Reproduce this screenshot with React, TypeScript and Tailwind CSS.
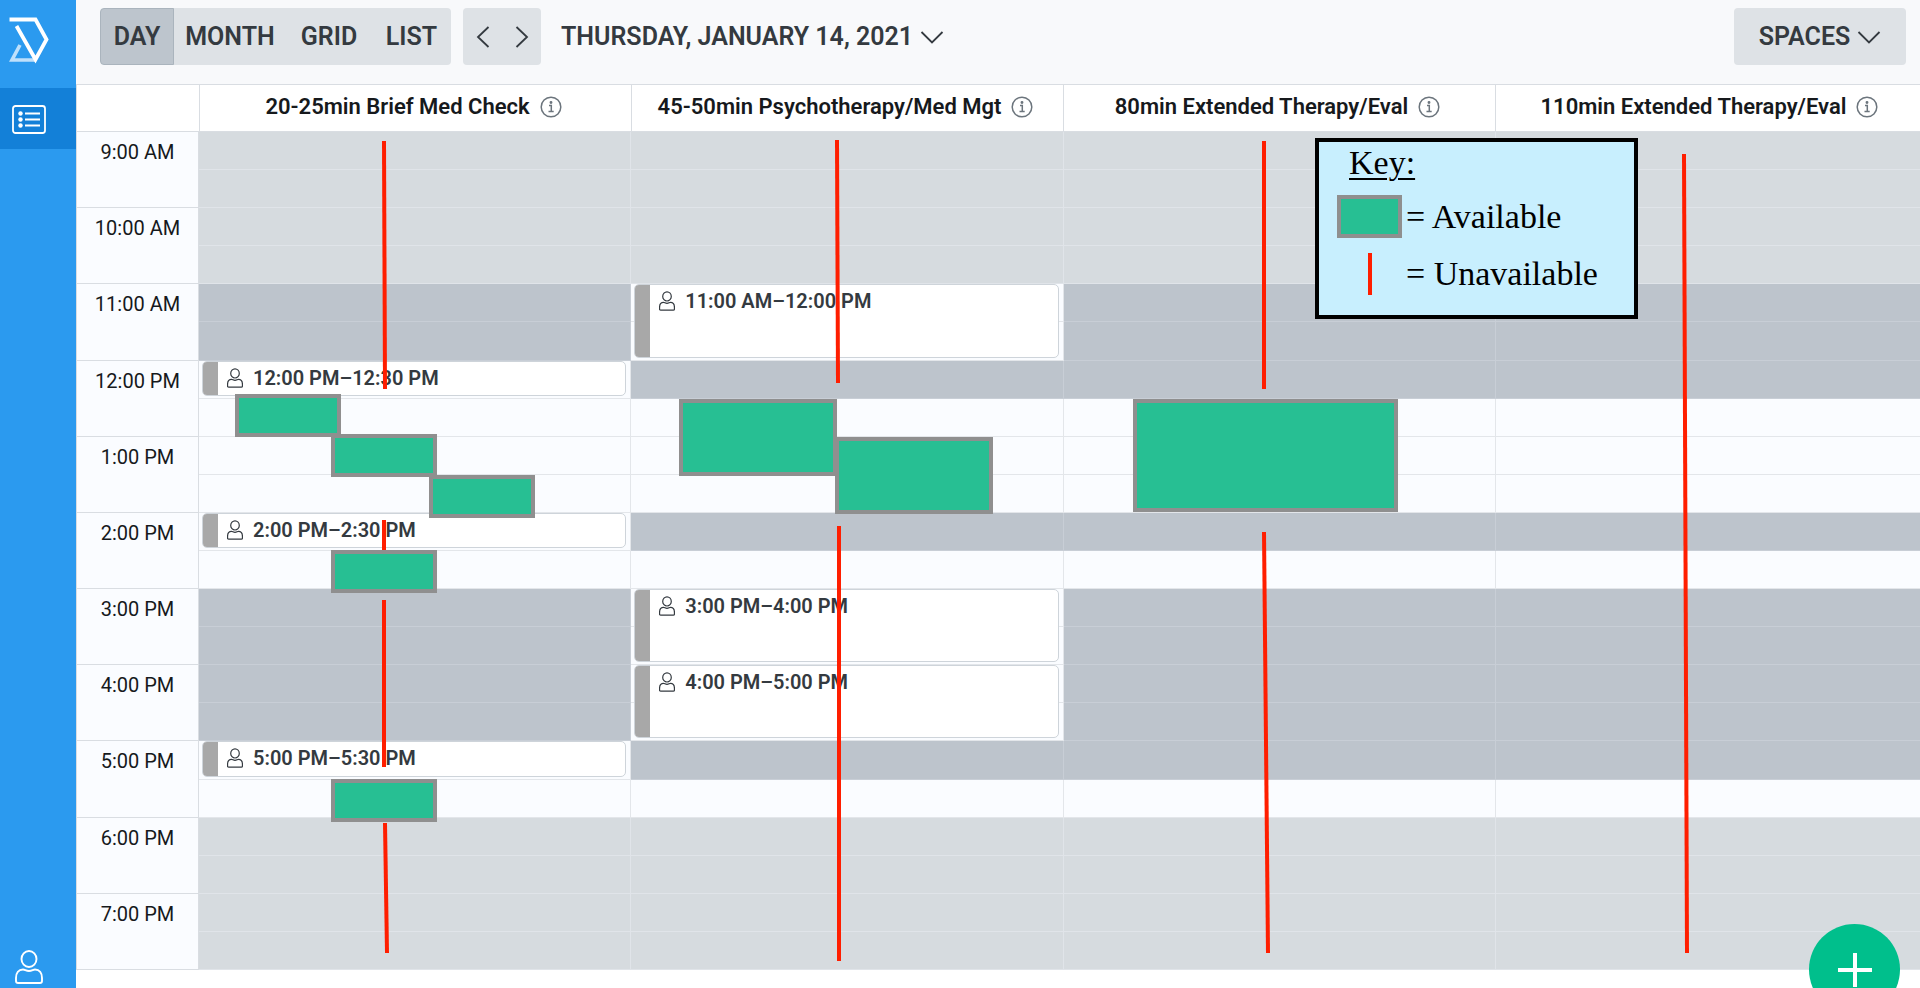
type Slot = 'closed' | 'busy' | 'open';

interface Appointment {
  start: number;
  span: number;
  label: string;
}

// Block: [left, top, width, height], Line: [x1, y1, x2, y2], both inside the column
interface Column {
  title: string;
  slots: string;
  appointments: Appointment[];
  blocks: [number, number, number, number][];
  lines: [number, number, number, number][];
}

const HOURS = [
  '9:00 AM', '10:00 AM', '11:00 AM', '12:00 PM', '1:00 PM', '2:00 PM',
  '3:00 PM', '4:00 PM', '5:00 PM', '6:00 PM', '7:00 PM',
];

// One letter per half hour: c = closed, b = busy, o = open
const SLOT_KINDS: Record<string, Slot> = { c: 'closed', b: 'busy', o: 'open' };

const SLOT_CLASSES: Record<Slot, string> = {
  closed: 'bg-[#d6dbdf] border-[#e0e4e9]',
  busy: 'bg-[#bdc4cc] border-[#c8ced6]',
  open: 'bg-[#fafcff] border-[#e3e6ea]',
};

const COLUMNS: Column[] = [
  {
    title: '20-25min Brief Med Check',
    slots: 'ccccbboooooobbbboocccc',
    appointments: [
      { start: 6, span: 1, label: '12:00 PM–12:30 PM' },
      { start: 10, span: 1, label: '2:00 PM–2:30 PM' },
      { start: 16, span: 1, label: '5:00 PM–5:30 PM' },
    ],
    blocks: [
      [36, 262, 106, 43],
      [132, 302, 106, 43],
      [230, 343, 106, 43],
      [132, 418, 106, 43],
      [132, 647, 106, 43],
    ],
    lines: [
      [185, 9, 186, 257],
      [185, 388, 185, 418],
      [185, 468, 185, 635],
      [186, 691, 188, 821],
    ],
  },
  {
    title: '45-50min Psychotherapy/Med Mgt',
    slots: 'ccccoobooobooooobocccc',
    appointments: [
      { start: 4, span: 2, label: '11:00 AM–12:00 PM' },
      { start: 12, span: 2, label: '3:00 PM–4:00 PM' },
      { start: 14, span: 2, label: '4:00 PM–5:00 PM' },
    ],
    blocks: [
      [48, 267, 158, 77],
      [204, 305, 158, 77],
    ],
    lines: [
      [206, 8, 207, 251],
      [208, 394, 208, 829],
    ],
  },
  {
    title: '80min Extended Therapy/Eval',
    slots: 'ccccbbbooobobbbbbocccc',
    appointments: [],
    blocks: [[69, 267, 265, 113]],
    lines: [
      [200, 9, 200, 257],
      [200, 400, 204, 821],
    ],
  },
  {
    title: '110min Extended Therapy/Eval',
    slots: 'ccccbbbooobobbbbbocccc',
    appointments: [],
    blocks: [],
    lines: [[188, 22, 191, 821]],
  },
];

function PersonIcon({ className, strokeWidth }: { className: string; strokeWidth: number }) {
  return (
    <svg viewBox="0 0 28 34" fill="none" stroke="currentColor" strokeWidth={strokeWidth} className={className}>
      <ellipse cx="14" cy="9" rx="7.5" ry="8" />
      <path d="M8 19.5C10 19.5 11 21 14 21C17 21 18 19.5 20 19.5C24.5 19.5 27 23 27 28V31Q27 33 25 33H3Q1 33 1 31V28C1 23 3.5 19.5 8 19.5Z" />
    </svg>
  );
}

function InfoIcon() {
  return (
    <svg viewBox="0 0 22 22" fill="none" stroke="#6c757d" strokeWidth="1.5" className="size-[22px]">
      <circle cx="11" cy="11" r="9.8" />
      <path d="M9 9.5H11.3V15.5M8.5 15.6H13.7" />
      <circle cx="11" cy="6.5" r="0.7" fill="#6c757d" />
    </svg>
  );
}

function ChevronDown() {
  return (
    <svg viewBox="0 0 24 24" fill="none" stroke="currentColor" strokeWidth="1.8" className="size-6">
      <path d="M1.5 7L12 17.5L22.5 7" />
    </svg>
  );
}

function Sidebar() {
  return (
    <nav className="flex w-[76px] shrink-0 flex-col bg-[#2b9aef] text-white">
      <a href="#" aria-label="Home" className="h-[88px]">
        <svg viewBox="0 0 76 88" fill="none" className="h-[88px] w-[76px]">
          <path d="M20 45L12 60H35" stroke="#bfe0fb" strokeWidth="3.6" />
          <path d="M9.5 19.5H35.5L46.5 39.5L35.5 59.5L16.5 26" stroke="white" strokeWidth="3.8" />
        </svg>
      </a>
      <a href="#" aria-label="Schedule" className="flex h-[61px] items-center bg-[#1380d8] pt-0.5 pl-3">
        <svg viewBox="0 0 34 29" fill="none" stroke="currentColor" strokeWidth="1.8" className="h-[29px] w-[34px]">
          <rect x="1" y="1" width="32" height="27" rx="2.5" />
          <path d="M13 8.5H28M13 14.5H28M13 20.5H28" />
          <g fill="currentColor" stroke="none">
            <circle cx="8.5" cy="8.5" r="2.2" />
            <circle cx="8.5" cy="14.5" r="2.2" />
            <circle cx="8.5" cy="20.5" r="2.2" />
          </g>
        </svg>
      </a>
      <a href="#" aria-label="Profile" className="mt-auto pb-1 pl-[15px]">
        <PersonIcon className="h-[34px] w-7" strokeWidth={1.9} />
      </a>
    </nav>
  );
}

function Toolbar() {
  return (
    <header className="flex h-[84px] items-start bg-[#f8f9fb] pt-2 pr-[14px] pl-6 text-[25px] font-semibold text-[#343a40]">
      <div className="flex h-[57px] overflow-hidden rounded-sm bg-[#dee2e6]">
        <button className="w-[74px] rounded-l-sm border border-[#aab4bd] bg-[#bdc5cd]">DAY</button>
        <button className="w-[112px]">MONTH</button>
        <button className="w-[86px]">GRID</button>
        <button className="w-[79px]">LIST</button>
      </div>
      <div className="ml-3 flex h-[57px] w-[78px] rounded-sm bg-[#dee2e6]">
        <button aria-label="Previous day" className="flex flex-1 items-center justify-center">
          <svg viewBox="0 0 14 24" fill="none" stroke="currentColor" strokeWidth="1.8" className="h-6 w-[14px]">
            <path d="M12.5 2L2 12L12.5 22" />
          </svg>
        </button>
        <button aria-label="Next day" className="flex flex-1 items-center justify-center">
          <svg viewBox="0 0 14 24" fill="none" stroke="currentColor" strokeWidth="1.8" className="h-6 w-[14px]">
            <path d="M1.5 2L12 12L1.5 22" />
          </svg>
        </button>
      </div>
      <button className="ml-5 flex h-[57px] items-center gap-[7px]">
        THURSDAY, JANUARY 14, 2021
        <ChevronDown />
      </button>
      <button className="ml-auto flex h-[57px] w-[172px] items-center justify-center gap-[7px] rounded-sm bg-[#dee2e6]">
        SPACES
        <ChevronDown />
      </button>
    </header>
  );
}

function AppointmentCard({ appointment }: { appointment: Appointment }) {
  const { start, span, label } = appointment;
  return (
    <div
      className="z-10 col-start-1 mr-[5px] mb-[3px] ml-[3px] flex overflow-hidden rounded-[5px] border border-[#ced4da] bg-white text-[#343a40]"
      style={{ gridRow: `${start + 1} / span ${span}` }}
    >
      <div className="w-[15px] bg-[#a8a8a8]" />
      <div className="flex h-8 items-center pl-[9px]">
        <PersonIcon className="h-5 w-4" strokeWidth={2.1} />
        <span className="ml-[10px] text-xl font-semibold">{label}</span>
      </div>
    </div>
  );
}

function DayColumn({ column }: { column: Column }) {
  return (
    <div className="relative grid grid-cols-1 grid-rows-[repeat(22,minmax(0,1fr))]">
      {column.slots.split('').map((kind, i) => (
        <div
          key={i}
          className={`col-start-1 border-r border-b ${SLOT_CLASSES[SLOT_KINDS[kind]]}`}
          style={{ gridRow: i + 1 }}
        />
      ))}
      {column.appointments.map((appointment) => (
        <AppointmentCard key={appointment.start} appointment={appointment} />
      ))}
      {column.blocks.map(([left, top, width, height]) => (
        <div
          key={`${left}-${top}`}
          className="absolute z-20 border-4 border-[#8f8f8f] bg-[#27bf93]"
          style={{ left, top, width, height }}
        />
      ))}
      <svg className="pointer-events-none absolute inset-0 z-20 size-full" stroke="#ff1e00" strokeWidth="4">
        {column.lines.map(([x1, y1, x2, y2]) => (
          <line key={y1} x1={x1} y1={y1} x2={x2} y2={y2} />
        ))}
      </svg>
    </div>
  );
}

function Key() {
  return (
    <aside className="absolute top-[6px] left-[1239px] z-30 h-[181px] w-[323px] border-4 border-black bg-[#c8effe] pl-[18px] font-['Liberation_Serif',serif] text-[34px] leading-[42px] text-black">
      <h2 className="pl-3 underline decoration-2 underline-offset-4">Key:</h2>
      <div className="mt-[11px] flex items-center gap-1">
        <div className="h-[43px] w-[65px] border-4 border-[#8f8f8f] bg-[#27bf93]" />
        <span>= Available</span>
      </div>
      <div className="mt-[15px] flex items-center gap-1">
        <div className="flex w-[65px] justify-center">
          <div className="h-[42px] w-1 bg-[#ff1e00]" />
        </div>
        <span>= Unavailable</span>
      </div>
    </aside>
  );
}

export default function App() {
  return (
    <div className="relative flex min-h-screen overflow-hidden bg-white font-[Roboto,'Liberation_Sans',sans-serif]">
      <Sidebar />
      <main className="min-w-0 flex-1">
        <Toolbar />
        <div className="relative -mr-2">
          <div className="grid h-12 grid-cols-[123px_repeat(4,minmax(0,1fr))] border-y border-l border-[#d9dde2]">
            <div className="border-r border-[#d9dde2]" />
            {COLUMNS.map((column) => (
              <div
                key={column.title}
                className="flex items-center justify-center gap-[10px] border-r border-[#d9dde2] pr-1 pb-[3px]"
              >
                <h2 className="text-[22px] font-semibold text-[#16191c]">{column.title}</h2>
                <button aria-label={`About ${column.title}`}>
                  <InfoIcon />
                </button>
              </div>
            ))}
          </div>
          <div className="relative grid h-[838px] grid-cols-[123px_repeat(4,minmax(0,1fr))]">
            <div className="grid grid-rows-[repeat(11,minmax(0,1fr))] border-l border-[#d9dde2]">
              {HOURS.map((hour) => (
                <div
                  key={hour}
                  className="border-r border-b border-[#d9dde2] bg-[#fafcff] pt-[6px] text-center text-xl text-[#16191c]"
                >
                  {hour}
                </div>
              ))}
            </div>
            {COLUMNS.map((column) => (
              <DayColumn key={column.title} column={column} />
            ))}
            <Key />
          </div>
        </div>
      </main>
      <button
        aria-label="Add appointment"
        className="absolute right-5 -bottom-[27px] z-40 flex size-[91px] items-center justify-center rounded-full bg-[#00bf8c]"
      >
        <svg viewBox="0 0 36 36" stroke="white" strokeWidth="4" className="size-9">
          <path d="M18 1V35M1 18H35" />
        </svg>
      </button>
    </div>
  );
}
